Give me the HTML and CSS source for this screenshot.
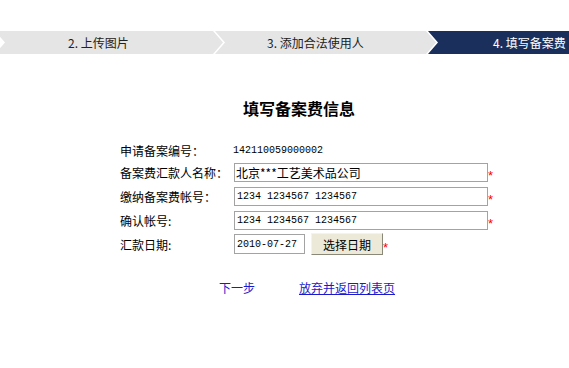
FILE: index.html
```html
<!DOCTYPE html>
<html lang="zh">
<head>
<meta charset="utf-8">
<title>填写备案费信息</title>
<link rel="stylesheet" href="styles.css">
</head>
<body>
<div class="steps">
  <div class="step step-1"><span>2. 上传图片</span></div>
  <div class="step step-2"><span>3. 添加合法使用人</span></div>
  <div class="step step-3 active"><span>4. 填写备案费</span></div>
</div>

<div class="content">
  <h1 class="title">填写备案费信息</h1>
  <div class="form">
    <div class="row">
      <div class="label">申请备案编号：</div>
      <div class="value num">142110059000002</div>
    </div>
    <div class="row">
      <div class="label">备案费汇款人名称：</div>
      <div class="value"><input class="field wide cjk" type="text" value="北京***工艺美术品公司"><span class="req">*</span></div>
    </div>
    <div class="row">
      <div class="label">缴纳备案费帐号：</div>
      <div class="value"><input class="field wide" type="text" value="1234 1234567 1234567"><span class="req">*</span></div>
    </div>
    <div class="row">
      <div class="label">确认帐号:</div>
      <div class="value"><input class="field wide" type="text" value="1234 1234567 1234567"><span class="req">*</span></div>
    </div>
    <div class="row">
      <div class="label">汇款日期:</div>
      <div class="value"><input class="field date" type="text" value="2010-07-27"><button class="btn" type="button">选择日期</button><span class="req">*</span></div>
    </div>
  </div>
  <div class="links">
    <a class="link next" href="#">下一步</a>
    <a class="link back" href="#">放弃并返回列表页</a>
  </div>
</div>
</body>
</html>
```

FILE: styles.css
```css
html, body {
  margin: 0;
  padding: 0;
  background: #ffffff;
}
body {
  font-family: "Noto Sans CJK SC", "Noto Sans", sans-serif;
  font-size: 12px;
  color: #000;
  overflow: hidden;
}

/* step bar */
.steps {
  margin-top: 31px;
  height: 23px;
  display: flex;
  overflow: hidden;
}
.step {
  height: 23px;
  background: #e5e5e5;
  color: #222;
  font-size: 12px;
  line-height: 23px;
  white-space: nowrap;
  flex: none;
  box-sizing: border-box;
  clip-path: polygon(0 0, calc(100% - 10px) 0, 100% 50%, calc(100% - 10px) 100%, 0 100%, 10px 50%);
}
.step-1 {
  width: 228px;
  margin-left: -5px;
  padding-left: 73px;
}
.step-2 {
  width: 221px;
  margin-left: -8px;
  padding-left: 52px;
}
.step-3 {
  width: 200px;
  margin-left: -8px;
  padding-left: 65px;
}
.step.active {
  background: #1b2f5c;
  color: #ffffff;
}

/* content */
.content {
  padding-left: 120px;
}
.title {
  margin: 44px 0 0 0;
  padding-left: 123px;
  font-size: 16px;
  line-height: 20px;
  font-weight: bold;
  color: #000;
}
.form {
  margin-top: 22px;
}
.row {
  display: flex;
  align-items: center;
  height: 24px;
}
.row:first-child {
  height: 20px;
}
.label {
  width: 113px;
  flex: none;
  font-size: 12px;
  white-space: nowrap;
}
.value {
  display: flex;
  align-items: center;
}
.num {
  font-family: "Liberation Mono", "DejaVu Sans Mono", monospace;
  font-size: 10px;
}
.field {
  height: 19px;
  box-sizing: border-box;
  border: 1px solid #a3a3a3;
  background: #fff;
  padding: 0 2px;
  margin: 0 0 0 1px;
  font-family: "Liberation Mono", "DejaVu Sans Mono", monospace;
  font-size: 10px;
  color: #000;
  outline: none;
}
.field.cjk {
  font-family: "Noto Sans CJK SC", sans-serif;
  font-size: 12px;
  padding: 0 1px;
}
.wide {
  width: 254px;
}
.date {
  width: 71px;
  height: 20px;
}
.btn {
  margin-left: 6px;
  width: 72px;
  height: 22px;
  padding: 0;
  background: #ece9d8;
  border: 1px solid;
  border-color: #f4f3ee #8a8878 #8a8878 #f4f3ee;
  font-family: "Noto Sans CJK SC", sans-serif;
  font-size: 12px;
  color: #000;
}
.req {
  color: #ff0000;
  font-family: "Liberation Sans", sans-serif;
  font-size: 13px;
  line-height: 13px;
  margin-left: 0;
  padding-top: 6px;
}

/* links */
.links {
  margin-top: 24px;
  padding-left: 99px;
  display: flex;
  gap: 44px;
  line-height: 16px;
}
.link {
  color: #1a1acc;
  font-size: 12px;
}
.link.next {
  text-decoration: none;
}
.link.back {
  text-decoration: underline;
}
```
